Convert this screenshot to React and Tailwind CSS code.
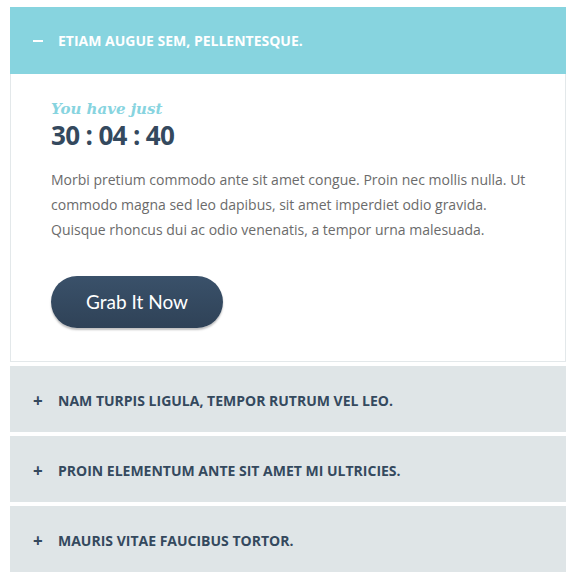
const items = [
  "Nam turpis ligula, tempor rutrum vel leo.",
  "Proin elementum ante sit amet mi ultricies.",
  "Mauris vitae faucibus tortor.",
];

const App = () => {
  return (
    <div className="bg-white w-[576px] h-[582px] px-[10px] pt-[7px] font-['Open_Sans',sans-serif]">
      <div className="flex flex-col gap-[4px]">
        <div>
          <div className="h-[67px] bg-[#87d4df] flex items-center pl-[23px] text-white text-[14px] font-bold uppercase">
            <span className="w-[25px] flex">
              <span className="w-[10px] h-[2px] bg-white"></span>
            </span>
            <span>Etiam augue sem, pellentesque.</span>
          </div>
          <div className="border border-t-0 border-[#e3e8ea] pl-[40px] pr-[30px] pt-[26px] pb-[33px]">
            <p className="font-['DejaVu_Serif',serif] italic font-bold text-[15px] leading-[18px] text-[#87d4df]">
              You have just
            </p>
            <p className="mt-[2px] text-[26px] font-bold leading-[30px] text-[#34495e] tracking-tight">
              30 : 04 : 40
            </p>
            <p className="mt-[17px] text-[14px] leading-[25px] text-[#6b6b6b]">
              Morbi pretium commodo ante sit amet congue. Proin nec mollis nulla. Ut
              commodo magna sed leo dapibus, sit amet imperdiet odio gravida.
              Quisque rhoncus dui ac odio venenatis, a tempor urna malesuada.
            </p>
            <button className="mt-[34px] w-[172px] h-[52px] rounded-full bg-gradient-to-b from-[#3a516a] to-[#2f4257] text-white text-[19px] font-['Lato',sans-serif] shadow-[0_2px_2px_rgba(0,0,0,0.25)]">
              Grab It Now
            </button>
          </div>
        </div>
        {items.map((t) => (
          <div
            key={t}
            className="h-[66px] bg-[#dfe5e7] flex items-center pl-[23px] pt-[3px] text-[#34495e] text-[14px] font-bold uppercase"
          >
            <span className="w-[25px] text-[17px] leading-none">+</span>
            <span>{t}</span>
          </div>
        ))}
      </div>
    </div>
  );
};

export default App;
